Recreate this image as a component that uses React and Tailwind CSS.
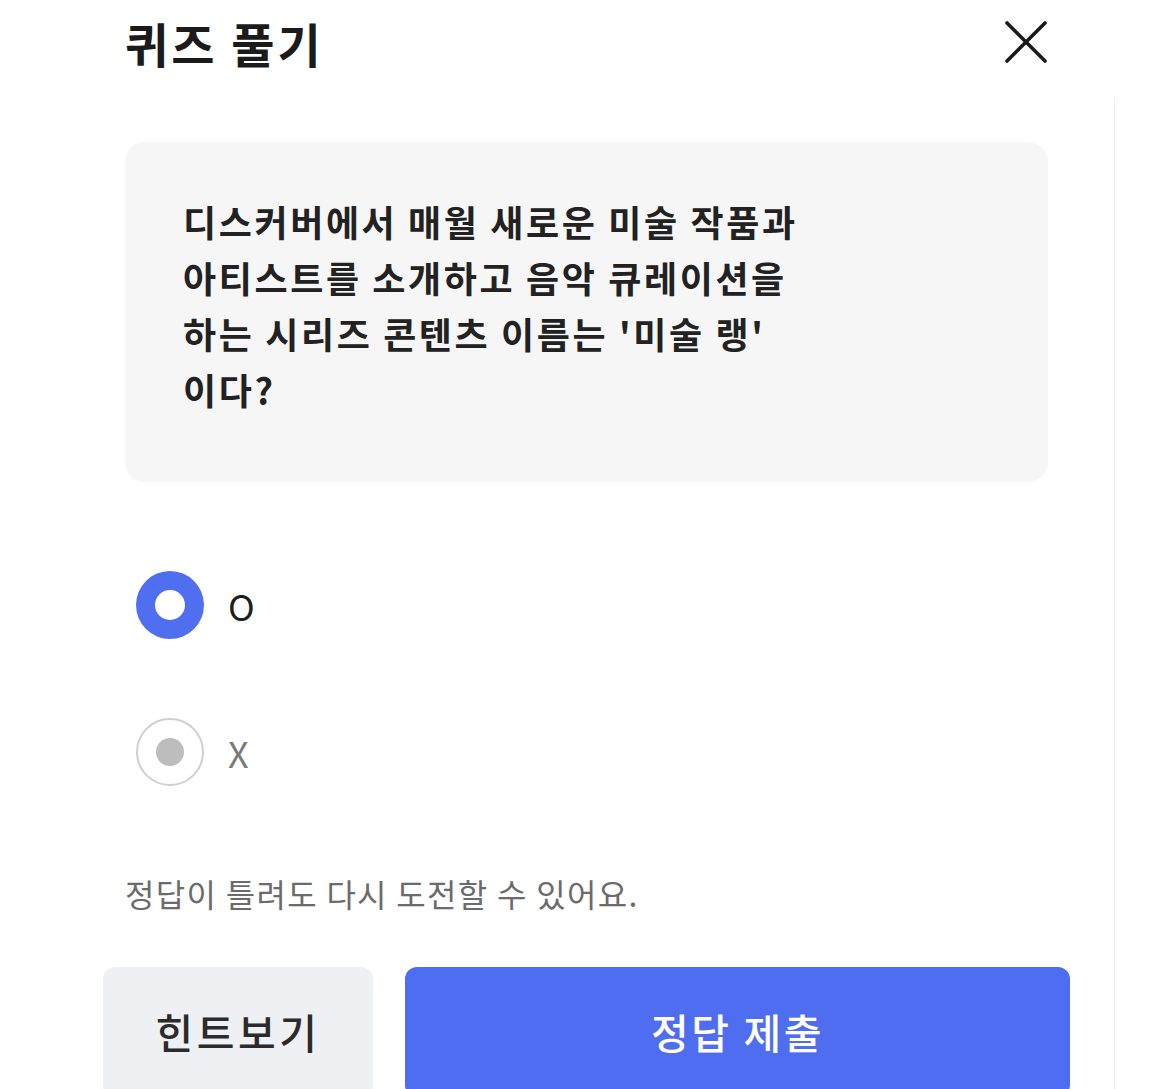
export default function App() {
  return (
    <div className="flex h-[1089px] overflow-hidden bg-white font-['Noto_Sans_CJK_KR','Noto_Sans',sans-serif]">
      {/* Modal column */}
      <div className="flex w-[1114px] shrink-0 flex-col">
        {/* Header */}
        <div className="flex h-[84px] shrink-0 items-center justify-between pl-[125px] pr-[64px]">
          <h1 className="text-[47px] font-bold leading-none tracking-[3px] text-[#1b1b1b]">퀴즈 풀기</h1>
          <button className="flex h-[48px] w-[48px] items-center justify-center" aria-label="닫기">
            <svg width="44" height="44" viewBox="0 0 44 44" fill="none">
              <path d="M3 3L41 41M41 3L3 41" stroke="#1b1b1b" strokeWidth="3.6" strokeLinecap="round" />
            </svg>
          </button>
        </div>

        {/* Question */}
        <div className="ml-[125px] mt-[58px] h-[340px] w-[923px] shrink-0 rounded-[20px] bg-[#f6f6f6] pl-[58px] pt-[51px]">
          <p className="text-[36px] font-semibold leading-[56px] tracking-[2.6px] text-[#222]">
            디스커버에서 매월 새로운 미술 작품과
            <br />
            아티스트를 소개하고 음악 큐레이션을
            <br />
            하는 시리즈 콘텐츠 이름는 '미술 랭'
            <br />
            이다?
          </p>
        </div>

        {/* Options */}
        <div className="mt-[89px] flex shrink-0 flex-col gap-[79px] pl-[136px]">
          <label className="flex items-center gap-[24px]">
            <span className="flex h-[68px] w-[68px] items-center justify-center rounded-full bg-[#4f6ef0]">
              <span className="h-[30px] w-[30px] rounded-full bg-white" />
            </span>
            <span className="text-[36px] leading-none text-[#1e1e1e]">O</span>
          </label>
          <label className="flex items-center gap-[24px]">
            <span className="flex h-[68px] w-[68px] items-center justify-center rounded-full border-[2px] border-[#cfcfcf] bg-white">
              <span className="h-[28px] w-[28px] rounded-full bg-[#bdbdbd]" />
            </span>
            <span className="text-[36px] leading-none text-[#7a7a7a]">X</span>
          </label>
        </div>

        {/* Note */}
        <p className="ml-[125px] mt-[86px] shrink-0 text-[32px] leading-[43px] tracking-[1.3px] text-[#6b6b6b]">
          정답이 틀려도 다시 도전할 수 있어요.
        </p>

        {/* Buttons */}
        <div className="ml-[103px] mt-[52px] flex shrink-0 gap-[32px]">
          <button className="flex h-[130px] w-[270px] shrink-0 items-center justify-center rounded-[12px] bg-[#eef0f3] text-[41px] font-medium tracking-[3.5px] text-[#2b2b2b]">
            힌트보기
          </button>
          <button className="flex h-[130px] w-[665px] shrink-0 items-center justify-center rounded-[12px] bg-[#4f6df0] text-[41px] font-medium tracking-[2.6px] text-white">
            정답 제출
          </button>
        </div>
      </div>

      {/* Right edge */}
      <div className="mt-[97px] flex-1 border-l border-[#ececec] bg-white" />
    </div>
  );
}
